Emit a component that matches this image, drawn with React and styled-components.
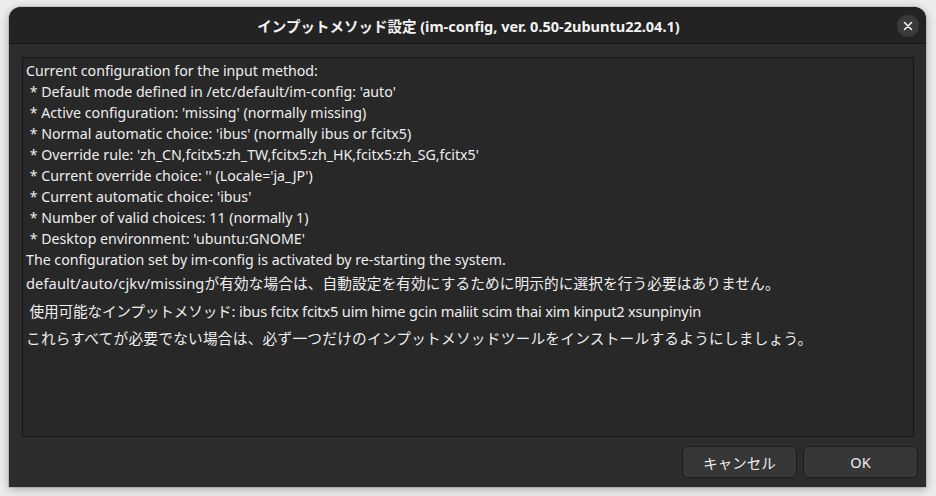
import React from "react"
import styled, { createGlobalStyle } from "styled-components"

const GlobalStyle = createGlobalStyle`
html, body {
  margin: 0;
  padding: 0;
  background: #ececec;
}
body {
  font-family: "Noto Sans", "Noto Sans CJK JP", sans-serif;
  -webkit-font-smoothing: antialiased;
}
`

const Screen = styled.div`
width: 936px;
height: 496px;
padding: 7px 10px 9px 9px;
box-sizing: border-box;
`

const Window = styled.div`
width: 917px;
height: 480px;
display: flex;
flex-direction: column;
background: #2c2c2c;
border-radius: 12px 12px 0 0;
box-shadow: 0 2px 10px rgba(0, 0, 0, 0.3), 0 0 0 1px rgba(0, 0, 0, 0.1);
overflow: hidden;
color: #eeeeee;
`

const HeaderBar = styled.div`
height: 36px;
flex: none;
display: flex;
align-items: center;
justify-content: center;
position: relative;
background: #232323;
border-bottom: 1px solid #161616;
`

const Title = styled.div`
font-family: "Noto Sans", "Noto Sans CJK JP", sans-serif;
font-weight: 700;
font-size: 14.5px;
color: #f2f2f2;
margin-left: 2px;
`

const CloseButton = styled.button`
position: absolute;
right: 7px;
top: 8px;
width: 22px;
height: 22px;
border-radius: 50%;
border: none;
padding: 0;
background: #3a3a3a;
display: flex;
align-items: center;
justify-content: center;
`

const Body = styled.div`
flex: 1;
display: flex;
flex-direction: column;
padding: 13px 12px 9px 13px;
gap: 9px;
`

const TextView = styled.div`
height: 380px;
box-sizing: border-box;
border: 1px solid #181818;
background: #282828;
padding: 2px 3px;
`

const Line = styled.div`
font-size: 14.2px;
line-height: 21px;
white-space: pre;
`

const JpLine = styled(Line)`
font-family: "Noto Sans", "Noto Sans CJK JP", sans-serif;
font-size: 14.67px;
letter-spacing: ${props => props.spacing || 0}px;
margin-top: ${props => props.gap}px;
`

const ButtonRow = styled.div`
display: flex;
justify-content: flex-end;
gap: 6px;
margin-right: -4px;
`

const Button = styled.button`
width: 115px;
height: 32px;
border-radius: 6px;
border: 1px solid #1c1c1c;
background: #373737;
color: #eeeeee;
font-family: "Noto Sans", "Noto Sans CJK JP", sans-serif;
font-size: 14.5px;
padding: 0;
`

const lines = [
  "Current configuration for the input method:",
  " * Default mode defined in /etc/default/im-config: 'auto'",
  " * Active configuration: 'missing' (normally missing)",
  " * Normal automatic choice: 'ibus' (normally ibus or fcitx5)",
  " * Override rule: 'zh_CN,fcitx5:zh_TW,fcitx5:zh_HK,fcitx5:zh_SG,fcitx5'",
  " * Current override choice: '' (Locale='ja_JP')",
  " * Current automatic choice: 'ibus'",
  " * Number of valid choices: 11 (normally 1)",
  " * Desktop environment: 'ubuntu:GNOME'",
  "The configuration set by im-config is activated by re-starting the system.",
]

const App = () => (
  <Screen>
    <GlobalStyle />
    <Window>
      <HeaderBar>
        <Title>インプットメソッド設定 (im-config, ver. 0.50-2ubuntu22.04.1)</Title>
        <CloseButton>
          <svg width="10" height="10" viewBox="0 0 10 10">
            <path d="M1.5 1.5 L8.5 8.5 M8.5 1.5 L1.5 8.5" stroke="#f0f0f0" strokeWidth="1.6" strokeLinecap="round" />
          </svg>
        </CloseButton>
      </HeaderBar>
      <Body>
        <TextView>
          {lines.map((l, i) => <Line key={i}>{l}</Line>)}
          <JpLine gap={3} spacing={0.1}>default/auto/cjkv/missingが有効な場合は、自動設定を有効にするために明示的に選択を行う必要はありません。</JpLine>
          <JpLine gap={7} spacing={-0.2}> 使用可能なインプットメソッド: ibus fcitx fcitx5 uim hime gcin maliit scim thai xim kinput2 xsunpinyin</JpLine>
          <JpLine gap={6} spacing={0.25}>これらすべてが必要でない場合は、必ず一つだけのインプットメソッドツールをインストールするようにしましょう。</JpLine>
        </TextView>
        <ButtonRow>
          <Button>キャンセル</Button>
          <Button>OK</Button>
        </ButtonRow>
      </Body>
    </Window>
  </Screen>
)

export default App
